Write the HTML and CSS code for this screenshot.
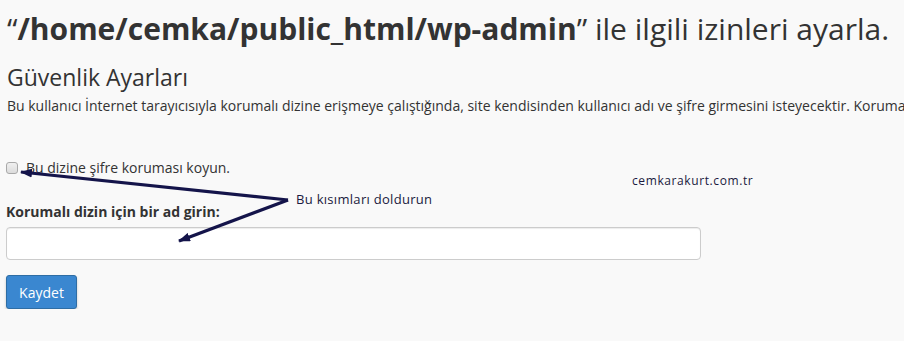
FILE: index.html
```html
<!DOCTYPE html>
<html lang="tr">
<head>
<meta charset="utf-8">
<link rel="stylesheet" href="styles.css">
</head>
<body>
<div class="page">
  <h1 class="title">“<b>/home/cemka/public_html/wp-admin</b>” ile ilgili izinleri ayarla.</h1>
  <h2 class="subtitle">Güvenlik Ayarları</h2>
  <p class="desc">Bu kullanıcı İnternet tarayıcısıyla korumalı dizine erişmeye çalıştığında, site kendisinden kullanıcı adı ve şifre girmesini isteyecektir. Korumalı dizin için bir ad girin.</p>
  <label class="check-row"><input type="checkbox" class="check"> Bu dizine şifre koruması koyun.</label>
  <label class="field-label" for="name">Korumalı dizin için bir ad girin:</label>
  <input id="name" class="field" type="text">
  <button class="btn">Kaydet</button>
</div>
<svg class="annot" width="904" height="341" viewBox="0 0 904 341">
  <defs>
    <marker id="ah" markerWidth="12" markerHeight="9" refX="11" refY="4.5" orient="auto" markerUnits="userSpaceOnUse">
      <path d="M0,0 L12,4.5 L0,9 Z" fill="#14144a"/>
    </marker>
  </defs>
  <line x1="288" y1="200" x2="21" y2="172" stroke="#14144a" stroke-width="3.2" marker-end="url(#ah)"/>
  <line x1="288" y1="200" x2="179" y2="241" stroke="#14144a" stroke-width="3.2" marker-end="url(#ah)"/>
</svg>
<span class="note note-fill">Bu kısımları doldurun</span>
<span class="note note-site">cemkarakurt.com.tr</span>
</body>
</html>
```
FILE: styles.css
```css
html, body {
  margin: 0;
  padding: 0;
  background: #f9f9f9;
  overflow: hidden;
}
body {
  width: 904px;
  height: 341px;
  position: relative;
  font-family: "Open Sans", "Liberation Sans", sans-serif;
  color: #333;
}
.page {
  width: 904px;
  overflow: hidden;
  box-sizing: border-box;
  padding: 0 6px;
  display: flex;
  flex-direction: column;
  align-items: flex-start;
}
.title {
  margin: 9px 0 0 1px;
  font-size: 30px;
  font-weight: 400;
  line-height: 40px;
  white-space: nowrap;
}
.title b {
  font-weight: 700;
}
.subtitle {
  margin: 13px 0 0 1px;
  font-size: 23px;
  font-weight: 400;
  line-height: 30px;
}
.desc {
  margin: 4px 0 0 1px;
  font-size: 14px;
  line-height: 20px;
  white-space: nowrap;
}
.check-row {
  margin-top: 42px;
  display: flex;
  align-items: center;
  font-size: 14px;
  line-height: 20px;
}
.check {
  appearance: none;
  -webkit-appearance: none;
  margin: 0 8px 0 0;
  width: 12px;
  height: 12px;
  box-sizing: border-box;
  border: 1px solid #a9a9a9;
  border-radius: 3px;
  background: linear-gradient(#f0f0f0, #dcdcdc);
}
.field-label {
  margin-top: 24px;
  font-size: 14px;
  font-weight: 700;
  line-height: 20px;
}
.field {
  margin-top: 5px;
  width: 695px;
  height: 33px;
  box-sizing: border-box;
  border: 1px solid #ccc;
  border-radius: 4px;
  background: #fff;
  box-shadow: inset 0 1px 1px rgba(0,0,0,0.075);
}
.btn {
  margin-top: 15px;
  width: 71px;
  height: 34px;
  background: #3a87d0;
  border: 1px solid #2e6da4;
  border-radius: 3px;
  color: #fff;
  font-family: "Open Sans", "Liberation Sans", sans-serif;
  font-size: 14px;
  box-shadow: 0 2px 3px rgba(0,0,0,0.2);
}
.annot {
  position: absolute;
  left: 0;
  top: 0;
  pointer-events: none;
}
.note {
  position: absolute;
  font-family: "Open Sans", "Liberation Sans", sans-serif;
  font-size: 13px;
  line-height: 16px;
  color: #1a1a40;
  white-space: nowrap;
}
.note-fill {
  left: 296px;
  top: 191px;
  letter-spacing: 0.3px;
}
.note-site {
  left: 632px;
  top: 173px;
  font-size: 12px;
  letter-spacing: 0.6px;
}
```
